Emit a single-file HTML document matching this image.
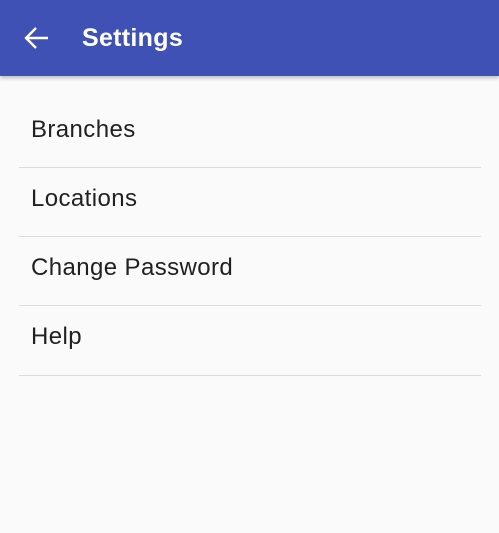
<!DOCTYPE html>
<html><head><style>
body{margin:0;width:499px;height:533px;background:#fafafa;font-family:"Liberation Sans",sans-serif;overflow:hidden;position:relative}
.bar{position:absolute;left:0;top:0;width:499px;height:76px;background:#3f51b5;box-shadow:0 2px 4px rgba(0,0,0,.25)}
.t{position:absolute;left:82px;top:24px;color:#fff;font-size:25px;font-weight:bold;letter-spacing:0.3px}
.item{position:absolute;left:31px;font-size:24px;letter-spacing:0.4px;color:#212121}
.hr{position:absolute;left:19px;width:462px;height:1px;background:#dcdcdc}
</style></head><body>
<div class="bar">
<svg style="position:absolute;left:24px;top:26px" width="25" height="24" viewBox="0 0 25 24"><path d="M24 12H2M12 2L2 12l10 10" stroke="#fff" stroke-width="2.4" fill="none"/></svg>
<div class="t">Settings</div></div>
<div class="item" style="top:116px">Branches</div><div class="hr" style="top:167px"></div>
<div class="item" style="top:185px">Locations</div><div class="hr" style="top:236px"></div>
<div class="item" style="top:254px">Change Password</div><div class="hr" style="top:305px"></div>
<div class="item" style="top:323px">Help</div><div class="hr" style="top:375px"></div>
</body></html>
